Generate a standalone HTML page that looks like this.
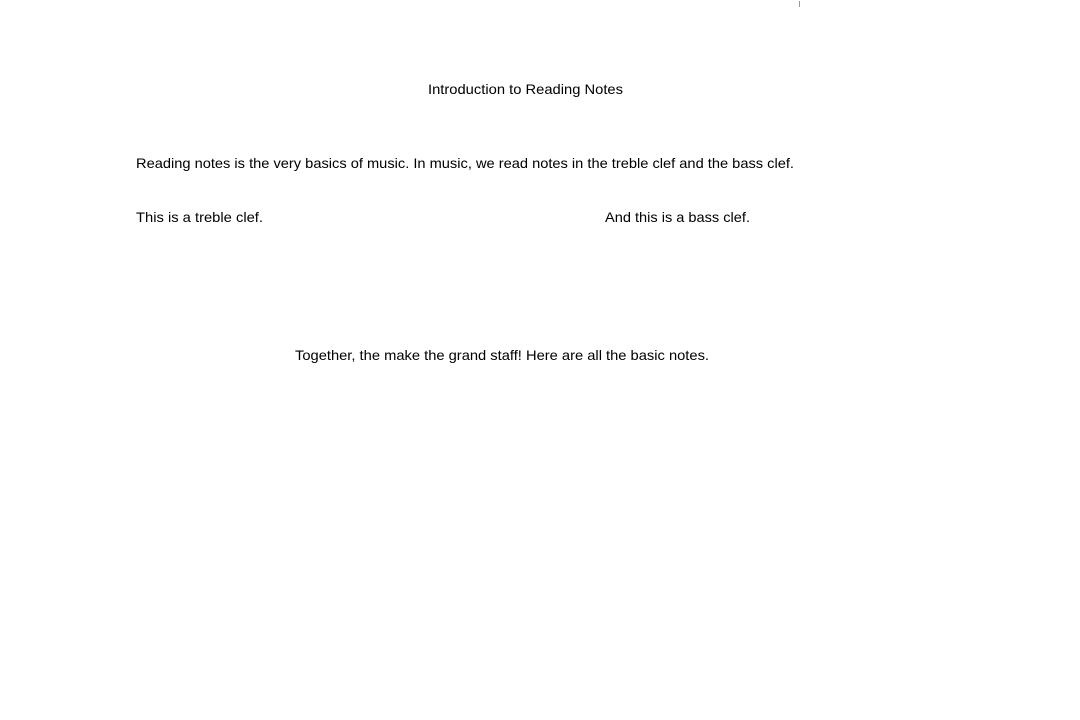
<!DOCTYPE html>
<html><head><style>
html,body{margin:0;padding:0;background:#fff;width:1080px;height:720px;overflow:hidden}
svg{display:block}
text{font-family:"Liberation Sans",sans-serif;font-size:14px;fill:#000}
</style></head><body>
<svg width="1080" height="720" xmlns="http://www.w3.org/2000/svg">
<rect x="799" y="1" width="1" height="6" fill="#999"/>
<text x="428" y="94" textLength="195" lengthAdjust="spacingAndGlyphs">Introduction to Reading Notes</text>
<text x="136" y="168" textLength="658" lengthAdjust="spacingAndGlyphs">Reading notes is the very basics of music. In music, we read notes in the treble clef and the bass clef.</text>
<text x="136" y="222" textLength="127" lengthAdjust="spacingAndGlyphs">This is a treble clef.</text>
<text x="605" y="222" textLength="145" lengthAdjust="spacingAndGlyphs">And this is a bass clef.</text>
<text x="295" y="360" textLength="414" lengthAdjust="spacingAndGlyphs">Together, the make the grand staff! Here are all the basic notes.</text>
</svg>
</body></html>
